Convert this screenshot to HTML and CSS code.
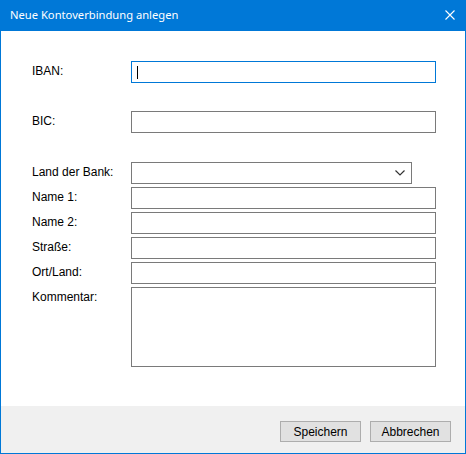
FILE: index.html
```html
<!DOCTYPE html>
<html lang="de">
<head>
<meta charset="utf-8">
<title>Neue Kontoverbindung anlegen</title>
<link rel="stylesheet" href="styles.css">
</head>
<body>
<div class="window">
  <div class="titlebar">
    <span class="title">Neue Kontoverbindung anlegen</span>
    <span class="close">
      <svg width="10" height="10" viewBox="0 0 10 10"><path d="M0.5 0.5 L9.5 9.5 M9.5 0.5 L0.5 9.5" stroke="#fff" stroke-width="1.1" fill="none"/></svg>
    </span>
  </div>
  <div class="content">
    <div class="row row-iban">
      <label class="lbl">IBAN:</label>
      <div class="field focused"><span class="caret"></span></div>
    </div>
    <div class="row row-bic">
      <label class="lbl">BIC:</label>
      <div class="field"></div>
    </div>
    <div class="group">
      <div class="row">
        <label class="lbl">Land der Bank:</label>
        <div class="field select">
          <svg class="chev" width="10" height="6" viewBox="0 0 10 6"><path d="M0.5 0.5 L5 5 L9.5 0.5" stroke="#333" stroke-width="1.2" fill="none"/></svg>
        </div>
      </div>
      <div class="row">
        <label class="lbl">Name 1:</label>
        <div class="field"></div>
      </div>
      <div class="row">
        <label class="lbl">Name 2:</label>
        <div class="field"></div>
      </div>
      <div class="row">
        <label class="lbl">Straße:</label>
        <div class="field"></div>
      </div>
      <div class="row">
        <label class="lbl">Ort/Land:</label>
        <div class="field"></div>
      </div>
      <div class="row">
        <label class="lbl">Kommentar:</label>
        <div class="field area"></div>
      </div>
    </div>
  </div>
  <div class="footer">
    <button class="btn">Speichern</button>
    <button class="btn">Abbrechen</button>
  </div>
</div>
</body>
</html>
```
FILE: styles.css
```css
html, body {
  margin: 0;
  padding: 0;
  background: #ffffff;
}
.window {
  width: 466px;
  height: 454px;
  box-sizing: border-box;
  border: 1px solid #0078d7;
  border-top: none;
  display: flex;
  flex-direction: column;
  font-family: "Liberation Sans", Arial, sans-serif;
  font-size: 12px;
  color: #000;
}
.titlebar {
  height: 31px;
  margin: 0 -1px;
  background: #0078d7;
  display: flex;
  align-items: center;
  justify-content: space-between;
  padding: 0 11px 0 10px;
  flex: none;
}
.title {
  color: #ffffff;
  font-family: "Noto Sans", "Open Sans", sans-serif;
  font-size: 11.2px;
  margin-top: -2px;
}
.close {
  display: flex;
  width: 10px;
  height: 10px;
  margin-top: -1px;
}
.content {
  flex: 1;
  background: #ffffff;
  padding: 30px 0 0 31px;
}
.row {
  display: flex;
  align-items: flex-start;
}
.lbl {
  width: 99px;
  line-height: 14px;
  padding-top: 3px;
  flex: none;
}
.field {
  width: 305px;
  height: 22px;
  box-sizing: border-box;
  border: 1px solid #7a7a7a;
  background: #fff;
  position: relative;
}
.field.focused {
  border-color: #0078d7;
}
.caret {
  display: block;
  width: 1px;
  height: 13px;
  background: #000;
  margin: 4px 0 0 5px;
}
.row-bic {
  margin-top: 28px;
}
.group {
  margin-top: 29px;
  display: flex;
  flex-direction: column;
  gap: 3px;
}
.field.select {
  width: 281px;
  display: flex;
  align-items: center;
  justify-content: flex-end;
  padding-right: 6px;
}
.chev {
  display: block;
}
.field.area {
  height: 80px;
}
.footer {
  height: 47px;
  flex: none;
  background: #f0f0f0;
  display: flex;
  justify-content: flex-end;
  align-items: flex-start;
  gap: 9px;
  padding: 15px 14px 0 0;
  box-sizing: border-box;
}
.btn {
  width: 81px;
  height: 21px;
  box-sizing: border-box;
  border: 1px solid #adadad;
  background: #e1e1e1;
  font-family: "Liberation Sans", Arial, sans-serif;
  font-size: 12px;
  color: #000;
  padding: 0;
  margin: 0;
}
```
